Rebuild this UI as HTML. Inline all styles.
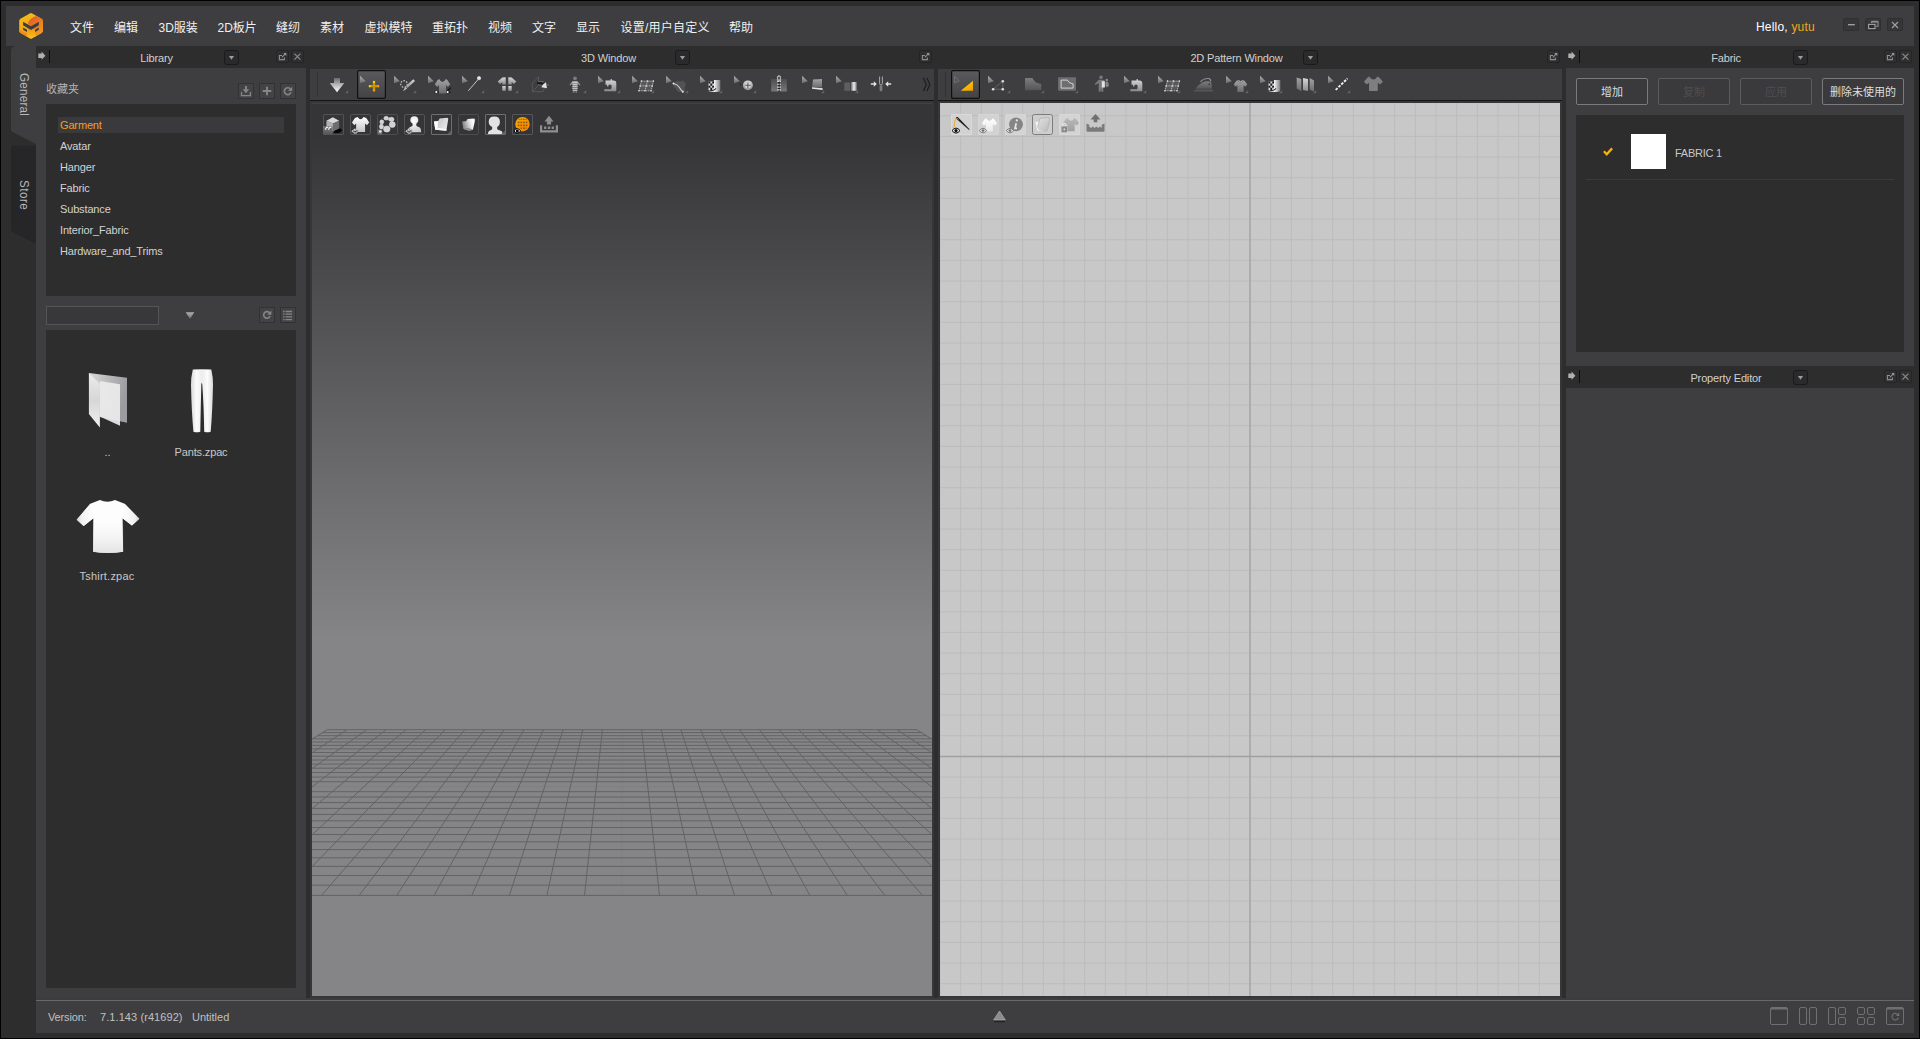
<!DOCTYPE html>
<html lang="zh-CN">
<head>
<meta charset="utf-8">
<title>CLO</title>
<style>
*{box-sizing:border-box;margin:0;padding:0}
html,body{width:1920px;height:1039px;overflow:hidden;background:#000}
body{position:relative;font-family:"Liberation Sans","Noto Sans CJK SC",sans-serif;font-size:11px;color:#c8c8c8;letter-spacing:-0.150px}
.abs{position:absolute}
#frame{left:1px;top:1px;width:1918px;height:1037px;background:#2d2d2d}
#titlebar{left:6px;top:6px;width:1908px;height:40px;background:#3e3e40}
.menu{position:absolute;top:21px;height:14px;line-height:14px;font-size:12px;color:#f0f0f0;white-space:nowrap;letter-spacing:0}
.panel{background:#3e3e40}
.dark{background:#2d2d2d}
.docktitle{position:absolute;height:22px;line-height:22px;text-align:center;color:#d0d0d0;font-size:11px;white-space:nowrap}
.tbtn{position:absolute;width:13px;height:13px;border:1px solid #242426;border-radius:2px;background:#2f2f31}
.dd{position:absolute;width:15px;height:15px;border:1px solid #1a1a1a;border-radius:3px;background:#2a2a2c}
.sbtn{position:absolute;width:16px;height:16px;border:1px solid #323234;background:#434345}
.wbtn{position:absolute;top:18px;width:16px;height:13px;border:1px solid #2f2f31;border-radius:1.500px;background:#363638}
.litem{position:absolute;left:60px;height:16px;line-height:16px;font-size:11px;color:#d2d2d2;white-space:nowrap}
.fbtn{letter-spacing:0;position:absolute;top:78px;height:27px;border:1px solid #7a7a7c;border-radius:2px;background:#3a3a3c;text-align:center;line-height:27px;font-size:11px;color:#dedede;white-space:nowrap}
.fbtn.dis{border-color:#5c5c5e;color:#4e4e50}
.st{position:absolute;top:1010px;font-size:11px;line-height:14px;color:#c0c0c0;white-space:nowrap}
svg{position:absolute;overflow:visible}
</style>
</head>
<body>
<svg width="0" height="0" style="left:0;top:0"><defs>
<linearGradient id="gCur" x1="0" y1="0" x2="0" y2="1"><stop offset="0" stop-color="#b0b0b0"/><stop offset="1" stop-color="#6a6a6a"/></linearGradient>
<linearGradient id="gArr" x1="0" y1="0" x2="0" y2="1"><stop offset="0" stop-color="#6a6a6a"/><stop offset="0.45" stop-color="#b4b4b4"/><stop offset="1" stop-color="#ffffff"/></linearGradient>
<linearGradient id="gSel" x1="0" y1="0" x2="0" y2="1"><stop offset="0" stop-color="#5a5a5c"/><stop offset="1" stop-color="#434345"/></linearGradient>
<linearGradient id="gL" x1="0" y1="0" x2="0" y2="1"><stop offset="0" stop-color="#d8d8d8"/><stop offset="1" stop-color="#8c8c8c"/></linearGradient>
<linearGradient id="gM" x1="0" y1="0" x2="0" y2="1"><stop offset="0" stop-color="#a4a4a4"/><stop offset="1" stop-color="#6a6a6a"/></linearGradient>
<linearGradient id="gD" x1="0" y1="0" x2="0" y2="1"><stop offset="0" stop-color="#7c7c7c"/><stop offset="1" stop-color="#555557"/></linearGradient>
<linearGradient id="gY" x1="0" y1="0" x2="1" y2="1"><stop offset="0" stop-color="#ffe000"/><stop offset="1" stop-color="#f09a00"/></linearGradient>
<linearGradient id="gH" x1="0" y1="0" x2="1" y2="0"><stop offset="0" stop-color="#6a6a6a"/><stop offset="0.5" stop-color="#f0f0f0"/><stop offset="1" stop-color="#7a7a7a"/></linearGradient>
<linearGradient id="gW" x1="0" y1="0" x2="0" y2="1"><stop offset="0" stop-color="#ffffff"/><stop offset="1" stop-color="#c4c4c4"/></linearGradient>
<linearGradient id="gC2" x1="0" y1="0" x2="1" y2="1"><stop offset="0" stop-color="#e2e2e2"/><stop offset="1" stop-color="#bcbcbc"/></linearGradient>
<linearGradient id="gC3" x1="0" y1="0" x2="0" y2="1"><stop offset="0" stop-color="#b8b8b8"/><stop offset="1" stop-color="#a0a0a0"/></linearGradient>
<linearGradient id="gW2" x1="0" y1="0" x2="0" y2="1"><stop offset="0" stop-color="#ffffff"/><stop offset="1" stop-color="#e8e8e8"/></linearGradient>
<linearGradient id="gCl" x1="0" y1="0" x2="1" y2="0.600"><stop offset="0" stop-color="#fafafa"/><stop offset="0.450" stop-color="#cfcfcf"/><stop offset="1" stop-color="#e8e8e8"/></linearGradient>
<linearGradient id="gCd" x1="0" y1="0.300" x2="1" y2="0"><stop offset="0" stop-color="#8a8a8a"/><stop offset="0.550" stop-color="#e8e8e8"/><stop offset="0.800" stop-color="#ffffff"/><stop offset="1" stop-color="#b0b0b0"/></linearGradient>
<linearGradient id="gGl" x1="0" y1="0" x2="1" y2="1"><stop offset="0" stop-color="#f2b000"/><stop offset="1" stop-color="#ff7c00"/></linearGradient>
<radialGradient id="gHd" cx="0.450" cy="0.300" r="0.800"><stop offset="0" stop-color="#ffffff"/><stop offset="1" stop-color="#c6c6c6"/></radialGradient>
<linearGradient id="gDz" x1="0" y1="0" x2="0" y2="1"><stop offset="0" stop-color="#4e4e50"/><stop offset="1" stop-color="#78787a"/></linearGradient>
<radialGradient id="gO" cx="0.4" cy="0.4" r="0.7"><stop offset="0" stop-color="#ffc21a"/><stop offset="1" stop-color="#e07800"/></radialGradient>
</defs></svg>
<div id="frame" class="abs"></div>
<div id="titlebar" class="abs"></div>
<svg style="left:14px;top:8px" width="36" height="36" viewBox="14 8 36 36">
<defs>
<linearGradient id="lgA" x1="0" y1="0" x2="0.300" y2="1"><stop offset="0" stop-color="#f7c016"/><stop offset="1" stop-color="#f09a18"/></linearGradient>
<linearGradient id="lgB" x1="0.200" y1="0" x2="0.800" y2="1"><stop offset="0" stop-color="#df5a2c"/><stop offset="1" stop-color="#f4a018"/></linearGradient>
<linearGradient id="lgC" x1="0" y1="0" x2="0" y2="1"><stop offset="0" stop-color="#ee8a1c"/><stop offset="1" stop-color="#f7c412"/></linearGradient>
</defs>
<path d="M29.800 13.400Q31 12.700 32.200 13.400L41.600 18.800Q42.800 19.500 42.800 20.900V30.800Q42.800 32.200 41.600 32.900L32.200 38.300Q31 39 29.800 38.300L20.400 32.900Q19.200 32.200 19.200 30.800V20.900Q19.200 19.500 20.400 18.800Z" fill="url(#lgA)"/>
<path d="M36.500 15.900L41.600 18.800Q42.800 19.500 42.800 20.900V30.800Q42.800 32.200 41.600 32.900L35 36.700L31 26.200Q27.500 24 28 22.500Q30.500 17.500 36.500 15.900Z" fill="url(#lgB)"/>
<path d="M27.500 30L31 26.200L35 30L36 36.100L32.200 38.300Q31 39 29.800 38.300L26.300 36.300Z" fill="url(#lgC)"/>
<path d="M20 30L27.300 34.200L26.300 36.300L20.400 32.900Q19.500 32.300 19.300 31.300Z" fill="#ee8a1c"/>
<path d="M23.100 21.800L31 26.300L38.800 21.800V25.200L31 30L23.100 25.200Z" fill="#3c3c40"/>
<path d="M23.100 27.400L27 29.650V32.100L23.100 29.800Z" fill="#3c3c40"/>
<path d="M38.800 27.400L35 29.650V32.100L38.800 29.800Z" fill="#3c3c40"/>
</svg>
<div id="menus">
<span class="menu" style="left:70px">文件</span>
<span class="menu" style="left:114px">编辑</span>
<span class="menu" style="left:158.5px">3D服装</span>
<span class="menu" style="left:217.5px">2D板片</span>
<span class="menu" style="left:276px">缝纫</span>
<span class="menu" style="left:320px">素材</span>
<span class="menu" style="left:364.5px">虚拟模特</span>
<span class="menu" style="left:432px">重拓扑</span>
<span class="menu" style="left:488px">视频</span>
<span class="menu" style="left:532px">文字</span>
<span class="menu" style="left:576px">显示</span>
<span class="menu" style="left:620.5px;letter-spacing:0.250px">设置/用户自定义</span>
<span class="menu" style="left:729px">帮助</span>
<span class="menu" style="left:1756px;top:20px;color:#fff;letter-spacing:0.200px">Hello, <span style="color:#f0a81c">yutu</span></span>
</div>
<div class="wbtn" style="left:1843px"></div><div class="wbtn" style="left:1865px"></div><div class="wbtn" style="left:1887px"></div>
<svg style="left:1843px;top:18px" width="62" height="14" viewBox="1843 18 62 14">
<path d="M1848 24.700H1854.800" stroke="#a6a6a6" stroke-width="1.300"/>
<path d="M1871.500 23V21.800H1878V26.300H1876" stroke="#8e8e8e" stroke-width="1.100" fill="none"/><path d="M1871.500 21.600H1878" stroke="#8e8e8e" stroke-width="1.700"/>
<rect x="1868.600" y="24.400" width="6.400" height="4.200" fill="#2a2a2c" stroke="#a2a2a2" stroke-width="1.100"/>
<path d="M1892 22L1898 28M1898 22L1892 28" stroke="#a0a0a0" stroke-width="1.150"/>
</svg>
<div id="sidebar">
<svg style="left:0;top:46px" width="40" height="210" viewBox="0 46 40 210">
<path d="M36 46H16Q11 46 11 51V129.500Q11 131.300 12.600 132.100L36 143.900Z" fill="#3e3e40"/>
<path d="M36 145.800H13.500Q11 145.800 11 148.300V229.500Q11 231.300 12.600 232.100L36 243.900Z" fill="#262628"/>
</svg>
<div class="abs" style="left:12.300px;top:73.300px;width:25px;height:60px;writing-mode:vertical-rl;line-height:25px;font-size:13.500px;letter-spacing:0.300px;color:#b8b8b8;transform:scaleY(0.860);transform-origin:0 0">General</div>
<div class="abs" style="left:12.300px;top:179.800px;width:25px;height:50px;writing-mode:vertical-rl;line-height:25px;font-size:13.500px;letter-spacing:0.600px;color:#b8b8b8;transform:scaleY(0.860);transform-origin:0 0">Store</div>
</div>
<div id="library">
<div class="abs panel" style="left:36px;top:68px;width:270px;height:932px"></div>
<div class="docktitle" style="left:36px;top:47px;width:241px">Library</div>
<svg style="left:38px;top:50px" width="14" height="14" viewBox="0 0 14 14"><path d="M0.300 3.500H3.600V1.600L7.400 5.700L3.600 9.800V7.900H0.300Z" fill="#b0b0b0"/><rect x="11" y="0" width="1" height="13" fill="#0c0c0c"/></svg>
<div class="dd" style="left:224px;top:50px"></div><svg style="left:224px;top:50px" width="15" height="15" viewBox="0 0 15 15"><path d="M4.900 6H10.100L7.500 9.700Z" fill="#9c9c9c"/></svg>
<div class="tbtn" style="left:276px;top:50px"></div><svg style="left:276px;top:50px" width="13" height="13" viewBox="0 0 13 13"><path d="M6 5.500H3.400V9.600H8.400V7.500" stroke="#8e8e8e" stroke-width="1.100" fill="none"/><path d="M5.800 7.400L9.300 3.900" stroke="#8e8e8e" stroke-width="1.100"/><path d="M7.300 3H10.300V6Z" fill="#9a9a9a"/></svg>
<div class="tbtn" style="left:291px;top:50px"></div><svg style="left:291px;top:50px" width="13" height="13" viewBox="0 0 13 13"><path d="M3.400 3.700L9.400 9.700M9.400 3.700L3.400 9.700" stroke="#8c8c8c" stroke-width="1.150"/></svg>
<div class="abs" style="left:46px;top:82px;font-size:11px;line-height:14px;letter-spacing:0;color:#b4b4b4">收藏夹</div>
<div class="sbtn" style="left:238px;top:83px"></div>
<div class="sbtn" style="left:259px;top:83px"></div>
<div class="sbtn" style="left:280px;top:83px"></div>
<svg style="left:238px;top:83px" width="58" height="16" viewBox="0 0 58 16">
<path d="M7 2.900H8.900V6.300H11.200L7.950 10.200L4.700 6.300H7Z" fill="#858587"/><path d="M3.500 9.100V12.700H12.400V9.100" stroke="#858587" stroke-width="1.300" fill="none"/>
<path d="M24.700 8.050H33.300M29 3.800V12.300" stroke="#858587" stroke-width="1.900"/>
<path d="M52.600 6.300A3.400 3.400 0 1 0 53 9.300" stroke="#858587" stroke-width="1.600" fill="none"/><path d="M54.200 3.800V8H50Z" fill="#858587"/>
</svg>
<div class="abs dark" style="left:46px;top:104px;width:250px;height:192px"></div>
<div class="abs" style="left:58px;top:117px;width:226px;height:16px;background:#3a3a3c"></div>
<div class="litem" style="top:117px;color:#f0a01e">Garment</div>
<div class="litem" style="top:138px">Avatar</div>
<div class="litem" style="top:159px">Hanger</div>
<div class="litem" style="top:180px">Fabric</div>
<div class="litem" style="top:201px">Substance</div>
<div class="litem" style="top:222px">Interior_Fabric</div>
<div class="litem" style="top:243px">Hardware_and_Trims</div>
<div class="abs" style="left:46px;top:306px;width:113px;height:19px;border:1px solid #545456;background:#38383a"></div>
<svg style="left:185px;top:312px" width="10" height="8" viewBox="0 0 10 8"><path d="M0.700 0.300H9.300L5 7Z" fill="url(#gCur)"/></svg>
<div class="sbtn" style="left:259px;top:307px"></div>
<div class="sbtn" style="left:280px;top:307px"></div>
<svg style="left:259px;top:307px" width="37" height="16" viewBox="0 0 37 16">
<path d="M10.700 6A3.300 3.300 0 1 0 11.100 9" stroke="#858587" stroke-width="1.600" fill="none"/><path d="M12.400 3.500V7.700H8.200Z" fill="#858587"/>
<path d="M26.500 4.500H33M26.500 7.200H33M26.500 9.900H33M26.500 12.600H33" stroke="#858587" stroke-width="1.300"/><path d="M24 4.500H25.500M24 7.200H25.500M24 9.900H25.500M24 12.600H25.500" stroke="#858587" stroke-width="1.300"/>
</svg>
<div class="abs dark" style="left:46px;top:330px;width:250px;height:658px"></div>
<svg style="left:60px;top:350px" width="200" height="220" viewBox="60 350 200 220">
<defs>
<linearGradient id="fA" x1="0" y1="0" x2="0" y2="1"><stop offset="0" stop-color="#ececec"/><stop offset="0.500" stop-color="#d6d6d6"/><stop offset="1" stop-color="#f0f0f0"/></linearGradient>
<linearGradient id="fB" x1="0" y1="0" x2="1" y2="0.300"><stop offset="0" stop-color="#d8d8d8"/><stop offset="1" stop-color="#9c9ca0"/></linearGradient>
<linearGradient id="pA" x1="0" y1="0" x2="1" y2="0"><stop offset="0" stop-color="#dadada"/><stop offset="0.250" stop-color="#fcfcfc"/><stop offset="0.500" stop-color="#ececec"/><stop offset="0.750" stop-color="#fcfcfc"/><stop offset="1" stop-color="#dadada"/></linearGradient>
<linearGradient id="sA" x1="0" y1="0" x2="1" y2="0"><stop offset="0" stop-color="#e0e0e0"/><stop offset="0.200" stop-color="#fdfdfd"/><stop offset="0.800" stop-color="#fdfdfd"/><stop offset="1" stop-color="#e0e0e0"/></linearGradient>
<linearGradient id="sB" x1="0" y1="0" x2="1" y2="0"><stop offset="0" stop-color="#ffffff"/><stop offset="0.750" stop-color="#f0f0f0"/><stop offset="1" stop-color="#cfcfcf"/></linearGradient>
<linearGradient id="sD" x1="0" y1="0" x2="0" y2="1"><stop offset="0" stop-color="#f4f4f4" stop-opacity="0"/><stop offset="1" stop-color="#d8d8d8" stop-opacity="0.700"/></linearGradient>
<linearGradient id="sC" x1="1" y1="0" x2="0" y2="0"><stop offset="0" stop-color="#ffffff"/><stop offset="0.750" stop-color="#f0f0f0"/><stop offset="1" stop-color="#cfcfcf"/></linearGradient>
</defs>
<path d="M88.900 373.100L127 377.700V422.800L99.800 417Z" fill="url(#fB)"/>
<path d="M99.800 381L120 384.200V425.700L99.800 416.400Z" fill="#ebebeb" opacity="0.920"/>
<path d="M88.900 373.100L99.850 383.500V427.400L88.900 414.100Z" fill="url(#fA)"/>
<path d="M192.800 369.600Q202 368.800 211.300 369.600Q213.200 378 213 385Q212.500 410 210.700 431.800Q207.500 432.800 204.200 431.800Q203.800 405 202.300 384.500L201.800 382.500L201.300 384.500Q200.800 405 200.300 431.800Q197 432.800 193.400 431.800Q191.500 410 191 385Q190.800 378 192.800 369.600Z" fill="url(#pA)"/>
<path d="M90.300 503.700L99.900 500Q107.500 503.400 115 500L124.600 503.700L139.300 518.800L131.900 525.600L122.600 518.300L123.100 551.700Q108 554.200 93.100 551.700L93.300 518.300L83.700 525.900L76.700 519.800Z" fill="url(#sA)"/>
<path d="M93.300 518.300L123.100 518.300L123.100 551.700Q108 554.200 93.100 551.700Z" fill="url(#sD)"/>
<path d="M90.300 503.700L76.700 519.800L83.700 525.900L93.300 518.300L94 508Z" fill="url(#sC)"/>
<path d="M124.600 503.700L139.300 518.800L131.900 525.600L122.600 518.300L122 508Z" fill="url(#sB)"/>
</svg>
<div class="abs" style="left:77px;top:446px;width:61px;text-align:center;font-size:11px;color:#c8c8c8">..</div>
<div class="abs" style="left:161px;top:446px;width:80px;text-align:center;font-size:11px;color:#c8c8c8">Pants.zpac</div>
<div class="abs" style="left:67px;top:570px;width:80px;text-align:center;font-size:11px;letter-spacing:0.220px;color:#c8c8c8">Tshirt.zpac</div>
</div>
<div id="win3d">
<div class="docktitle" style="left:310px;top:47px;width:597px;height:23px;line-height:23px">3D Window</div>
<div class="dd" style="left:675px;top:50px"></div><svg style="left:675px;top:50px" width="15" height="15" viewBox="0 0 15 15"><path d="M4.900 6H10.100L7.500 9.700Z" fill="#9c9c9c"/></svg>
<div class="tbtn" style="left:919px;top:50px"></div><svg style="left:919px;top:50px" width="13" height="13" viewBox="0 0 13 13"><path d="M6 5.500H3.400V9.600H8.400V7.500" stroke="#8e8e8e" stroke-width="1.100" fill="none"/><path d="M5.800 7.400L9.300 3.900" stroke="#8e8e8e" stroke-width="1.100"/><path d="M7.300 3H10.300V6Z" fill="#9a9a9a"/></svg>
<div class="abs panel" style="left:310px;top:69px;width:624px;height:31px"></div>
<div class="abs" style="left:310px;top:100px;width:624px;height:898px;background:#363638"></div>
<div class="abs" style="left:310px;top:100px;width:624px;height:1.200px;background:#141414"></div>
<div class="abs" style="left:312px;top:103px;width:620px;height:893px;background:linear-gradient(to bottom,#353537 0,#353537 34px,#858587 537px,#858587 100%);overflow:hidden;box-shadow:inset 0 1px 0 #414143">
<svg style="left:-312px;top:-103px" width="1920" height="1039" viewBox="0 0 1920 1039"><path d="M235.0 786.6H1009.0M622.0 895.4L622.0 729.7" fill="none" stroke="#808082" stroke-width="1"/><path d="M58.8 895.4H1185.2M75.4 885.2H1168.6M91.0 875.5H1153.0M105.8 866.4H1138.2M119.8 857.8H1124.2M133.0 849.6H1111.0M145.6 841.8H1098.4M157.5 834.5H1086.5M168.8 827.5H1075.2M179.6 820.8H1064.4M190.0 814.4H1054.0M199.8 808.4H1044.2M209.2 802.6H1034.8M218.2 797.0H1025.8M226.8 791.7H1017.2M242.9 781.7H1001.1M250.5 777.1H993.5M257.8 772.5H986.2M264.8 768.2H979.2M271.6 764.1H972.4M278.1 760.0H965.9M284.3 756.2H959.7M290.4 752.5H953.6M296.2 748.9H947.8M301.8 745.4H942.2M307.3 742.0H936.7M312.5 738.8H931.5M317.6 735.7H926.4M322.5 732.6H921.5M327.3 729.7H916.7M58.8 895.4L327.3 729.7M96.3 895.4L346.9 729.7M133.9 895.4L366.6 729.7M171.4 895.4L386.2 729.7M209.0 895.4L405.9 729.7M246.5 895.4L425.5 729.7M284.1 895.4L445.2 729.7M321.6 895.4L464.8 729.7M359.2 895.4L484.5 729.7M396.7 895.4L504.1 729.7M434.2 895.4L523.8 729.7M471.8 895.4L543.4 729.7M509.4 895.4L563.1 729.7M546.9 895.4L582.7 729.7M584.5 895.4L602.4 729.7M659.5 895.4L641.6 729.7M697.1 895.4L661.3 729.7M734.6 895.4L680.9 729.7M772.2 895.4L700.6 729.7M809.8 895.4L720.2 729.7M847.3 895.4L739.9 729.7M884.8 895.4L759.5 729.7M922.4 895.4L779.2 729.7M960.0 895.4L798.8 729.7M997.5 895.4L818.5 729.7M1035.0 895.4L838.1 729.7M1072.6 895.4L857.8 729.7M1110.2 895.4L877.4 729.7M1147.7 895.4L897.1 729.7M1185.2 895.4L916.7 729.7" fill="none" stroke="#636365" stroke-width="1"/></svg>
</div>
<div class="abs" style="left:317px;top:72px;width:1px;height:25px;background:#323234"></div>
<svg style="left:320px;top:69px" width="34" height="31" viewBox="0 0 34 31"><path d="M14 9H20V14H24.300L17 23.200L9.700 14H14Z" fill="url(#gArr)"/><path d="M28.200 21V24.200H25Z" fill="#626264"/></svg>
<svg style="left:354px;top:69px" width="34" height="31" viewBox="0 0 34 31"><rect x="3.600" y="1.600" width="27.800" height="27.800" rx="1.300" fill="url(#gSel)" stroke="#101010" stroke-width="1.200"/><path d="M6 6.800V14.200L11.800 12.200Z" fill="url(#gCur)"/><path d="M20 12.200V22.200M15 17.200H25" stroke="#c89400" stroke-width="2.300" fill="none"/><circle cx="20" cy="13" r="1.150" fill="#ffd400"/><circle cx="20" cy="21.400" r="1.150" fill="#ff9a00"/><circle cx="15.800" cy="17.200" r="1.150" fill="#ffd400"/><circle cx="24.200" cy="17.200" r="1.150" fill="#ff9a00"/></svg>
<svg style="left:388px;top:69px" width="34" height="31" viewBox="0 0 34 31"><path d="M6 6.800V14.200L11.800 12.200Z" fill="url(#gCur)"/><circle cx="16" cy="15" r="3.300" fill="none" stroke="#c8c8c8" stroke-width="1.200" stroke-dasharray="1.600 1.300"/><path d="M25.300 10.300L27 12L19.500 19L17.500 17.200Z" fill="url(#gL)"/><path d="M17.300 17.700L19.200 19.500L15 22.300Z" fill="#bdbdbd"/><path d="M28.200 21V24.200H25Z" fill="#626264"/></svg>
<svg style="left:422px;top:69px" width="34" height="31" viewBox="0 0 34 31"><path d="M6 6.800V14.200L11.800 12.200Z" fill="url(#gCur)"/><path d="M17.09 10.00Q20.50 16.09 23.91 10.00L25.32 11.02L28.25 15.37L25.95 18.12L24.06 16.23V24.50H16.94V16.23L15.05 18.12L12.75 15.37L15.68 11.02Z" fill="url(#gM)" /><path d="M12.500 23.300H17M24 23.300H28.500M28.600 18.500L25 23" stroke="#1a1a1a" stroke-width="1.600" fill="none"/><circle cx="14.300" cy="23" r="1.100" fill="#fff"/><circle cx="25.600" cy="23" r="1.100" fill="#fff"/></svg>
<svg style="left:456px;top:69px" width="34" height="31" viewBox="0 0 34 31"><path d="M6 6.800V14.200L11.800 12.200Z" fill="url(#gCur)"/><path d="M12.300 21.800L22 10.600" stroke="#c4c4c4" stroke-width="1"/><circle cx="23" cy="9.300" r="1.950" fill="url(#gW)"/><path d="M28.200 21V24.200H25Z" fill="#626264"/></svg>
<svg style="left:490px;top:69px" width="34" height="31" viewBox="0 0 34 31"><path d="M15.700 8.200V15.500H12.300V13.300L10 15L7.700 12.400L12.300 8.500Z" fill="url(#gL)"/><path d="M18.300 8.200V15.500H21.700V13.300L24 15L26.300 12.400L21.700 8.500Z" fill="url(#gL)"/><rect x="12.300" y="17" width="3.400" height="4.800" fill="url(#gL)"/><rect x="18.300" y="17" width="3.400" height="4.800" fill="url(#gL)"/><path d="M28.200 21V24.200H25Z" fill="#626264"/></svg>
<svg style="left:524px;top:69px" width="34" height="31" viewBox="0 0 34 31"><path d="M8.300 14.200L14.500 8V16.500L8.300 22.700ZM14.500 16.500H21.500L19 22.700H8.300" fill="none" stroke="#58585a" stroke-width="1"/><path d="M14.500 12.600H19.500" stroke="#6a6a6c" stroke-width="1"/><path d="M13 14H17.200L21.300 17.200" stroke="#1c1c1c" stroke-width="2.200" fill="none"/><path d="M19 15.600L22 13.200L23 19.200L17.300 18.300Z" fill="#e0e0e0"/><path d="M22.500 16.800L25 15.600" stroke="#6a6a6c" stroke-width="1"/></svg>
<svg style="left:558px;top:69px" width="34" height="31" viewBox="0 0 34 31"><circle cx="17" cy="9.300" r="1.900" fill="#7c7c7c"/><path d="M14.700 12H19.300L22.500 15.800L21.700 16.600L19.600 14.600V20L19 24H17.600L17 20.500L16.400 24H15L14.400 20V14.600L12.300 16.600L11.500 15.800Z" fill="url(#gM)"/><path d="M14.400 13.500H19.600M14.400 15.500H19.600M14.400 17.500H19.600M14.400 19.500H19.600M14.800 21.500H19.200" stroke="#d8d8d8" stroke-width="0.700" fill="none"/><path d="M28.200 21V24.200H25Z" fill="#626264"/></svg>
<svg style="left:592px;top:69px" width="34" height="31" viewBox="0 0 34 31"><path d="M6 6.800V14.200L11.800 12.200Z" fill="url(#gCur)"/><path d="M13.500 11.500H18.500V10.200H20V11.500H22Q24.300 11.500 24.300 14V22.300H12.300V20.300H19.300V15.800H16.500V17.500H15V15.800H13.500Z" fill="url(#gL)"/><path d="M17 19L19.300 16.500V19Z" fill="#3e3e40"/><path d="M28.200 21V24.200H25Z" fill="#626264"/></svg>
<svg style="left:626px;top:69px" width="34" height="31" viewBox="0 0 34 31"><path d="M6 6.800V14.200L11.800 12.200Z" fill="url(#gCur)"/><path d="M15.400 12.100H27.400L25.100 21.800H12.900Z" fill="#58585a"/><path d="M15.400 12.100H27.400M14.100 16.900H26.300M12.900 21.800H25.100M15.400 12.100L12.900 21.800M21.500 12.100L19 21.800M27.400 12.100L25.100 21.800" stroke="#c2c2c2" stroke-width="0.800" stroke-dasharray="1.500 0.700" fill="none"/><path d="M15.400 12.100h0.010M21.500 12.100h0.010M27.400 12.100h0.010M14.100 16.900h0.010M20.200 16.900h0.010M26.300 16.900h0.010M12.900 21.800h0.010M19 21.800h0.010M25.100 21.800h0.010" stroke="#e8e8e8" stroke-width="1.500" stroke-linecap="round"/><path d="M28.200 21V24.200H25Z" fill="#626264"/></svg>
<svg style="left:660px;top:69px" width="34" height="31" viewBox="0 0 34 31"><path d="M6 6.800V14.200L11.800 12.200Z" fill="url(#gCur)"/><path d="M14.500 13.500L17.500 11.500L20.500 12.700L23 11.300L26.200 15.500L24.500 19L25.500 22.500L18 23L15.500 19.500L13 17Z" fill="#525254"/><path d="M13.400 14.500Q17.500 15.500 19.200 18.200T22.800 22.800" stroke="#d0d0d0" stroke-width="1.100" fill="none"/><circle cx="13.500" cy="14.500" r="1" fill="#e8e8e8"/><circle cx="22.800" cy="22.800" r="1" fill="#e8e8e8"/><path d="M28.200 21V24.200H25Z" fill="#626264"/></svg>
<svg style="left:694px;top:69px" width="34" height="31" viewBox="0 0 34 31"><path d="M6 6.800V14.200L11.800 12.200Z" fill="url(#gCur)"/><path d="M14.500 12.500H20V21H14.500Z" fill="#d8d8d8"/><path d="M14.500 12.500h1.850v2.100h-1.850zM18.200 12.500h1.850v2.100h-1.850zM16.350 14.600h1.850v2.100h-1.850zM14.500 16.700h1.850v2.100h-1.850zM18.200 16.700h1.850v2.100h-1.850zM16.350 18.800h1.850v2.200h-1.850z" fill="#1a1a1a"/><path d="M20 11H26.300V20.500Q26.300 23 23 23H15.500Q14.500 23 14.500 21.500Q19.500 21.500 20 18Z" fill="url(#gH)"/><path d="M16.500 21.700Q20.500 21.500 22 19.500" stroke="#1a1a1a" stroke-width="1.100" fill="none"/><path d="M28.200 21V24.200H25Z" fill="#626264"/></svg>
<svg style="left:728px;top:69px" width="34" height="31" viewBox="0 0 34 31"><path d="M6 6.800V14.200L11.800 12.200Z" fill="url(#gCur)"/><path d="M11.800 14.600L13.200 16" stroke="#2a2a2a" stroke-width="1.200"/><circle cx="19.900" cy="16.300" r="4.900" fill="url(#gL)"/><circle cx="19.900" cy="16.300" r="3" fill="#d6d6d6"/><path d="M17.200 16.300H22.600M19.900 13.600V19" stroke="#4a4a4a" stroke-width="0.900"/><path d="M28.200 21V24.200H25Z" fill="#626264"/></svg>
<svg style="left:762px;top:69px" width="34" height="31" viewBox="0 0 34 31"><path d="M9.200 10H24.800V22.500H9.200Z" fill="url(#gDz)"/><path d="M16 10H18V22.500H16Z" fill="#222"/><path d="M15.200 12.500H18.800M15.200 15.300H18.800M15.200 18.100H18.800M15.200 20.900H18.800" stroke="#e8e8e8" stroke-width="1.100" stroke-dasharray="1.700 0.500"/><path d="M15.400 7.500Q17 5.500 18.600 7.500V11.500H15.400Z" fill="#9a9a9a" stroke="#d8d8d8" stroke-width="0.600"/><rect x="16.300" y="8" width="1.400" height="2.300" fill="#3a3a3a"/></svg>
<svg style="left:796px;top:69px" width="34" height="31" viewBox="0 0 34 31"><path d="M6 6.800V14.200L11.800 12.200Z" fill="url(#gCur)"/><path d="M17 10.500L26 10V18.500L16.200 18Z" fill="url(#gM)"/><path d="M16 18.300L26.600 19.300V21L16 19.800Z" fill="#e6e6e6"/><path d="M28.200 21V24.200H25Z" fill="#626264"/></svg>
<svg style="left:830px;top:69px" width="34" height="31" viewBox="0 0 34 31"><path d="M6 6.800V14.200L11.800 12.200Z" fill="url(#gCur)"/><path d="M14.300 13.500H20.300V21.800H14.300Z" fill="#5e5e60"/><path d="M21 13H26.800V21.800H21Z" fill="url(#gH)"/><path d="M28.200 21V24.200H25Z" fill="#626264"/></svg>
<svg style="left:864px;top:69px" width="34" height="31" viewBox="0 0 34 31"><path d="M15.600 7.500V14.500Q15.600 16 17 16T18.400 14.500V7.500" stroke="#a8a8a8" stroke-width="1" fill="none"/><path d="M15.600 16.500H18.400V20.800Q18.400 22.300 17 22.300T15.600 20.800Z" fill="#7c7c7c"/><path d="M6.800 15H10.500M23.500 15H27.200" stroke="#dcdcdc" stroke-width="1.300"/><path d="M9.800 12.300L12.800 15L9.800 17.700ZM24.200 12.300L21.200 15L24.200 17.700Z" fill="#e6e6e6"/></svg>
<svg style="left:922px;top:77px" width="10" height="15" viewBox="0 0 10 15"><path d="M1.500 1L4.300 7.500L1.500 14M5 1L7.800 7.500L5 14" stroke="#1c1c1e" stroke-width="1.100" fill="none"/></svg>
<svg style="left:322.7px;top:113.800px" width="21" height="21" viewBox="0 0 21 21"><rect x="0.500" y="0.500" width="20" height="20" rx="0.5" fill="none" stroke="#525254" stroke-width="1"/><path d="M11.500 15.200L17 14.200L19.400 16.200L16 18.900H11Z" fill="#050505"/><path d="M9.800 3.300L16.200 6.700L10 9.500L3.400 6.700Z" fill="#d8d8d8"/><path d="M3.400 6.700L10 9.500V17.500L3.400 14.500Z" fill="#b2b2b2"/><path d="M10 9.500L16.200 6.700V14.500L10 17.500Z" fill="#6c6c6c"/><path d="M0.300 12.200H9.700V20.800H0.300Z" fill="url(#gD)"/><path d="M2.200 15.700L3.700 13.300H5.200M5.300 15.700L6.800 13.300H8.300" stroke="#f0f0f0" stroke-width="1.200" fill="none"/></svg>
<svg style="left:349.7px;top:113.800px" width="21" height="21" viewBox="0 0 21 21"><rect x="0.500" y="0.500" width="20" height="20" rx="1.5" fill="none" stroke="#545456" stroke-width="1"/><path d="M7.68 2.95Q10.60 7.45 13.52 2.95L16.31 4.00L19.20 8.50L16.93 11.35L15.07 9.40V17.95H6.13V9.40L4.27 11.35L2.00 8.50L4.89 4.00Z" fill="url(#gW)" /><path d="M1.55 17.20Q5.25 11.60 8.95 17.20Q5.25 22.80 1.55 17.20Z" fill="#7c7c7c"/><path d="M2.05 17.20Q5.25 13.20 8.45 17.20Q5.25 21.20 2.05 17.20Z" fill="none" stroke="#f4f4f4" stroke-width="1" stroke-dasharray="1.300 1.100"/><circle cx="5.25" cy="17.20" r="1" fill="#4a4a4a"/><circle cx="5.05" cy="16.20" r="0.700" fill="#fff"/></svg>
<svg style="left:376.7px;top:113.800px" width="21" height="21" viewBox="0 0 21 21"><rect x="0.500" y="0.500" width="20" height="20" rx="1.5" fill="none" stroke="#4e4e50" stroke-width="1"/><ellipse cx="15.3" cy="10.6" rx="3" ry="3" fill="#d2d2d2" stroke="#e6e6e6" stroke-width="0.500"/><ellipse cx="9.8" cy="15" rx="3.3" ry="3.1" fill="#d2d2d2" stroke="#e6e6e6" stroke-width="0.500"/><ellipse cx="4.4" cy="12.6" rx="2" ry="2.5" fill="#d2d2d2" stroke="#e6e6e6" stroke-width="0.500"/><ellipse cx="4.8" cy="7.95" rx="2" ry="2.1" fill="#d2d2d2" stroke="#e6e6e6" stroke-width="0.500"/><ellipse cx="9.2" cy="4.2" rx="2.3" ry="1.9" fill="#d2d2d2" stroke="#e6e6e6" stroke-width="0.500"/><ellipse cx="14.3" cy="5.3" rx="2.7" ry="2.1" fill="#d2d2d2" stroke="#e6e6e6" stroke-width="0.500"/><rect x="0.500" y="15.500" width="4.800" height="5" fill="#6c6c6c"/><circle cx="3.300" cy="17.500" r="1.300" fill="#ececec"/></svg>
<svg style="left:403.7px;top:113.800px" width="21" height="21" viewBox="0 0 21 21"><rect x="0.500" y="0.500" width="20" height="20" rx="1.5" fill="none" stroke="#545456" stroke-width="1"/><path d="M10.300 2.300Q14.300 2.300 14.300 6.200Q14.300 8.800 12.300 9.800V11.300Q12.300 12.200 13.500 12.500Q16.400 13.200 16.800 15L17.200 18.200H3.800L4.300 15Q4.800 13.200 7.300 12.500Q8.600 12.200 8.600 11.300V9.800Q6.300 8.800 6.300 6.200Q6.300 2.300 10.300 2.300Z" fill="url(#gHd)"/><path d="M1.55 17.20Q5.25 11.60 8.95 17.20Q5.25 22.80 1.55 17.20Z" fill="#7c7c7c"/><path d="M2.05 17.20Q5.25 13.20 8.45 17.20Q5.25 21.20 2.05 17.20Z" fill="none" stroke="#f4f4f4" stroke-width="1" stroke-dasharray="1.300 1.100"/><circle cx="5.25" cy="17.20" r="1" fill="#4a4a4a"/><circle cx="5.05" cy="16.20" r="0.700" fill="#fff"/></svg>
<svg style="left:430.7px;top:113.800px" width="21" height="21" viewBox="0 0 21 21"><rect x="0.500" y="0.500" width="20" height="20" rx="0.5" fill="none" stroke="#6e6e70" stroke-width="1"/><path d="M3 7.500L7.200 7L8.700 4.500L16 3.800Q17.600 3.800 17.200 5.500L15.300 16.700L4.300 15.800Z" fill="url(#gCl)"/><path d="M3 7.500L7.200 7.300L6.300 15.900L4.300 15.800Z" fill="#ffffff"/><path d="M4.300 15.800L6.500 13.800L15.600 15L15.300 16.700Z" fill="#f6f6f6"/><path d="M20 16.500V20H16.500Z" fill="#5e5e60"/></svg>
<svg style="left:457.7px;top:113.800px" width="21" height="21" viewBox="0 0 21 21"><rect x="0.500" y="0.500" width="20" height="20" rx="1.5" fill="none" stroke="#4c4c4e" stroke-width="1"/><path d="M4.200 7.600L8 7.300L9.500 5L16 4.500Q17.600 4.500 17.200 6L14.900 15.800Q10 17.800 5.300 14.800Z" fill="url(#gCd)"/><path d="M5.300 14.800Q10 12.600 14.900 15.800Q10 17.800 5.300 14.800Z" fill="#8c8c8c"/></svg>
<svg style="left:484.7px;top:113.800px" width="21" height="21" viewBox="0 0 21 21"><rect x="0.500" y="0.500" width="20" height="20" rx="0.5" fill="none" stroke="#6e6e70" stroke-width="1"/><path d="M9.300 2.400Q14.900 2.400 14.900 7.800Q14.900 11.500 12.200 13V14.800Q12.200 15.800 13.500 16.100Q17 16.700 17.500 18.800V19.900H3V18.800Q3.500 16.700 6 16.100Q7.200 15.800 7.200 14.800V13Q3.700 11.500 3.700 7.800Q3.700 2.400 9.300 2.400Z" fill="#e2e2e2"/><path d="M20 16.500V20H16.500Z" fill="#5e5e60"/></svg>
<svg style="left:511.7px;top:113.800px" width="21" height="21" viewBox="0 0 21 21"><rect x="0.500" y="0.500" width="20" height="20" rx="0.5" fill="none" stroke="#565658" stroke-width="1"/><circle cx="10.500" cy="10.200" r="7.200" fill="url(#gGl)"/><rect x="5.8" y="7.6" width="1.6" height="1.6" fill="#6e4a10" opacity="0.800"/><rect x="8.4" y="7.6" width="1.7" height="1.6" fill="#6e4a10" opacity="0.800"/><rect x="11.1" y="7.6" width="1.7" height="1.6" fill="#6e4a10" opacity="0.800"/><rect x="13.8" y="7.6" width="1.5" height="1.6" fill="#6e4a10" opacity="0.800"/><rect x="5.8" y="10.6" width="1.6" height="1.6" fill="#6e4a10" opacity="0.800"/><rect x="8.4" y="10.6" width="1.7" height="1.6" fill="#6e4a10" opacity="0.800"/><rect x="11.1" y="10.6" width="1.7" height="1.6" fill="#6e4a10" opacity="0.800"/><rect x="13.8" y="10.6" width="1.5" height="1.6" fill="#6e4a10" opacity="0.800"/><rect x="8.5" y="13.5" width="1.5" height="1.4" fill="#6e4a10" opacity="0.800"/><rect x="11.1" y="13.5" width="1.7" height="1.5" fill="#6e4a10" opacity="0.800"/><rect x="13.6" y="13.5" width="1" height="1.2" fill="#6e4a10" opacity="0.800"/><rect x="6.5" y="5" width="1.1" height="0.9" fill="#6e4a10" opacity="0.800"/><rect x="8.6" y="4.8" width="1.5" height="1.1" fill="#6e4a10" opacity="0.800"/><rect x="11.1" y="4.8" width="1.6" height="1.1" fill="#6e4a10" opacity="0.800"/><rect x="13.5" y="5" width="1.1" height="0.9" fill="#6e4a10" opacity="0.800"/><path d="M1.90 16.90Q5.30 12.50 8.70 16.90Q5.30 21.30 1.90 16.90Z" fill="#f4f4f4" stroke="#000" stroke-width="1.00"/><circle cx="5.30" cy="16.90" r="1.50" fill="#000"/></svg>
<svg style="left:540.400px;top:114.500px" width="18" height="18" viewBox="0 0 18 18"><path d="M9 0.700L13.500 6.600H11.100V9.500H6.900V6.600H4.500Z" fill="#8e8e90"/><path d="M0 10.300H2.200V15.300H15.800V10.300H18V17.500H0Z" fill="#8e8e90"/><rect x="4.100" y="11.500" width="2.300" height="2.500" fill="#8e8e90"/><rect x="7.900" y="11.500" width="2.300" height="2.500" fill="#8e8e90"/><rect x="11.600" y="11.500" width="2.300" height="2.500" fill="#8e8e90"/></svg>
</div>
<div id="win2d">
<div class="docktitle" style="left:938px;top:47px;width:597px;height:23px;line-height:23px">2D Pattern Window</div>
<div class="dd" style="left:1303px;top:50px"></div><svg style="left:1303px;top:50px" width="15" height="15" viewBox="0 0 15 15"><path d="M4.900 6H10.100L7.500 9.700Z" fill="#9c9c9c"/></svg>
<div class="tbtn" style="left:1547px;top:50px"></div><svg style="left:1547px;top:50px" width="13" height="13" viewBox="0 0 13 13"><path d="M6 5.500H3.400V9.600H8.400V7.500" stroke="#8e8e8e" stroke-width="1.100" fill="none"/><path d="M5.800 7.400L9.300 3.900" stroke="#8e8e8e" stroke-width="1.100"/><path d="M7.300 3H10.300V6Z" fill="#9a9a9a"/></svg>
<div class="abs panel" style="left:938px;top:69px;width:624px;height:31px"></div>
<div class="abs" style="left:938px;top:100px;width:624px;height:898px;background:#363638"></div>
<div class="abs" style="left:938px;top:100px;width:624px;height:1.200px;background:#141414"></div>
<div class="abs" style="left:940px;top:103px;width:620px;height:893px;background:#c8c8c8;overflow:hidden">
<svg style="left:-940px;top:-103px" width="1920" height="1039" viewBox="0 0 1920 1039"><path d="M940.0 103V996M960.67 103V996M981.33 103V996M1002.0 103V996M1022.67 103V996M1043.33 103V996M1064.0 103V996M1084.67 103V996M1105.33 103V996M1126.0 103V996M1146.67 103V996M1167.33 103V996M1188.0 103V996M1208.67 103V996M1229.33 103V996M1270.67 103V996M1291.33 103V996M1312.0 103V996M1332.67 103V996M1353.33 103V996M1374.0 103V996M1394.67 103V996M1415.33 103V996M1436.0 103V996M1456.67 103V996M1477.33 103V996M1498.0 103V996M1518.67 103V996M1539.33 103V996M940 115.73H1560M940 136.4H1560M940 157.07H1560M940 177.73H1560M940 198.4H1560M940 219.07H1560M940 239.73H1560M940 260.4H1560M940 281.07H1560M940 301.73H1560M940 322.4H1560M940 343.07H1560M940 363.73H1560M940 384.4H1560M940 405.07H1560M940 425.73H1560M940 446.4H1560M940 467.07H1560M940 487.73H1560M940 508.4H1560M940 529.07H1560M940 549.73H1560M940 570.4H1560M940 591.07H1560M940 611.73H1560M940 632.4H1560M940 653.07H1560M940 673.73H1560M940 694.4H1560M940 715.07H1560M940 735.73H1560M940 777.07H1560M940 797.73H1560M940 818.4H1560M940 839.07H1560M940 859.73H1560M940 880.4H1560M940 901.07H1560M940 921.73H1560M940 942.4H1560M940 963.07H1560M940 983.73H1560" fill="none" stroke="#bcbcbc" stroke-width="1"/><path d="M1250 103V996" fill="none" stroke="#adadad" stroke-width="2"/><path d="M940 756.400H1560" fill="none" stroke="#a0a0a0" stroke-width="1.500"/></svg>
</div>
<div class="abs" style="left:945px;top:72px;width:1px;height:25px;background:#323234"></div>
<svg style="left:948px;top:69px" width="34" height="31" viewBox="0 0 34 31"><rect x="3.600" y="1.600" width="27.800" height="27.800" rx="1.300" fill="url(#gSel)" stroke="#101010" stroke-width="1.200"/><path d="M6.600 7.400V13.800L11.200 11.600Z" fill="none" stroke="#77777a" stroke-width="0.900"/><path d="M25 11.800V21.800H12.800Z" fill="url(#gY)"/></svg>
<svg style="left:982px;top:69px" width="34" height="31" viewBox="0 0 34 31"><path d="M6 6.800V14.200L11.800 12.200Z" fill="url(#gCur)"/><path d="M20.800 12.200V20.200H11.100Z" fill="none" stroke="#6a6a6c" stroke-width="0.900"/><circle cx="20.800" cy="12.200" r="1.300" fill="#e0e0e0"/><circle cx="20.800" cy="20.200" r="1.300" fill="#e0e0e0"/><circle cx="11.100" cy="20.200" r="1.300" fill="#e0e0e0"/><path d="M28.200 21V24.200H25Z" fill="#626264"/></svg>
<svg style="left:1016px;top:69px" width="34" height="31" viewBox="0 0 34 31"><path d="M9 9.100H16.500Q18.500 14.400 25.300 15V21.200H9Z" fill="url(#gD)"/><path d="M28.200 21V24.200H25Z" fill="#626264"/></svg>
<svg style="left:1050px;top:69px" width="34" height="31" viewBox="0 0 34 31"><rect x="8.100" y="8.200" width="17.900" height="13.600" rx="0.800" fill="#6e6e70"/><path d="M11.100 11.100H17.300Q18.300 14.200 23.100 14.900V19.100H11.100Z" fill="none" stroke="#d4d4d4" stroke-width="1"/><path d="M28.200 21V24.200H25Z" fill="#626264"/></svg>
<svg style="left:1084px;top:69px" width="34" height="31" viewBox="0 0 34 31"><g transform="translate(0 -1)"><circle cx="17" cy="9.300" r="1.700" fill="#7c7c7c"/><path d="M14.800 11.700H19.200L21 13V19L19.300 19.500V23.800H17.500L17 20L16.500 23.800H14.700V15L11.500 17L10.700 16.200Z" fill="#7a7a7c"/><path d="M17.800 13.200H20.800V19.500H17.800Z" fill="#e2e2e2"/><circle cx="22.800" cy="12" r="1.300" fill="#8a8a8a"/><path d="M21.500 13.800H24L25 17.500L23 19.500L21.500 18Z" fill="#868686"/></g></svg>
<svg style="left:1118px;top:69px" width="34" height="31" viewBox="0 0 34 31"><path d="M6 6.800V14.200L11.800 12.200Z" fill="url(#gCur)"/><path d="M13.500 11.500H18.500V10.200H20V11.500H22Q24.300 11.500 24.300 14V22.300H12.300V20.300H19.300V15.800H16.500V17.500H15V15.800H13.500Z" fill="url(#gL)"/><path d="M17 19L19.300 16.500V19Z" fill="#3e3e40"/><path d="M28.200 21V24.200H25Z" fill="#626264"/></svg>
<svg style="left:1152px;top:69px" width="34" height="31" viewBox="0 0 34 31"><path d="M6 6.800V14.200L11.800 12.200Z" fill="url(#gCur)"/><path d="M15.400 12.100H27.400L25.100 21.800H12.900Z" fill="#58585a"/><path d="M15.400 12.100H27.400M14.100 16.900H26.300M12.900 21.800H25.100M15.400 12.100L12.900 21.800M21.500 12.100L19 21.800M27.400 12.100L25.100 21.800" stroke="#c2c2c2" stroke-width="0.800" stroke-dasharray="1.500 0.700" fill="none"/><path d="M15.400 12.100h0.010M21.500 12.100h0.010M27.400 12.100h0.010M14.100 16.900h0.010M20.200 16.900h0.010M26.300 16.900h0.010M12.900 21.800h0.010M19 21.800h0.010M25.100 21.800h0.010" stroke="#e8e8e8" stroke-width="1.500" stroke-linecap="round"/><path d="M28.200 21V24.200H25Z" fill="#626264"/></svg>
<svg style="left:1186px;top:69px" width="34" height="31" viewBox="0 0 34 31"><path d="M9.500 19.800Q13.500 13.800 19.500 12.300H23Q25.300 12.300 25.500 14.500L26 19.800Z" fill="url(#gD)"/><path d="M14.500 12.800Q17.500 9.300 22.500 9.500Q24.800 9.800 24.800 12.300" stroke="#8e8e8e" stroke-width="1.200" fill="none"/><path d="M7.500 22.600L9.500 20.500H26L27.800 22.600Z" fill="#565658"/><circle cx="23.300" cy="15.300" r="0.800" fill="#2a2a2a"/></svg>
<svg style="left:1220px;top:69px" width="34" height="31" viewBox="0 0 34 31"><path d="M6 6.800V14.200L11.800 12.200Z" fill="url(#gCur)"/><path d="M17.51 11.20Q20.50 16.16 23.49 11.20L24.73 12.03L27.30 15.57L25.28 17.81L23.63 16.27V23.00H17.37V16.27L15.72 17.81L13.70 15.57L16.27 12.03Z" fill="url(#gM)" /><path d="M18.500 11.500Q20.500 14.200 22.500 11.500" stroke="#e0e0e0" stroke-width="1" fill="none"/><path d="M28.200 21V24.200H25Z" fill="#626264"/></svg>
<svg style="left:1254px;top:69px" width="34" height="31" viewBox="0 0 34 31"><path d="M6 6.800V14.200L11.800 12.200Z" fill="url(#gCur)"/><path d="M14.500 12.500H20V21H14.500Z" fill="#d8d8d8"/><path d="M14.500 12.500h1.850v2.100h-1.850zM18.200 12.500h1.850v2.100h-1.850zM16.350 14.600h1.850v2.100h-1.850zM14.500 16.700h1.850v2.100h-1.850zM18.200 16.700h1.850v2.100h-1.850zM16.350 18.800h1.850v2.200h-1.850z" fill="#1a1a1a"/><path d="M20 11H26.300V20.500Q26.300 23 23 23H15.500Q14.500 23 14.500 21.500Q19.500 21.500 20 18Z" fill="url(#gH)"/><path d="M16.500 21.700Q20.500 21.500 22 19.500" stroke="#1a1a1a" stroke-width="1.100" fill="none"/><path d="M28.200 21V24.200H25Z" fill="#626264"/></svg>
<svg style="left:1288px;top:69px" width="34" height="31" viewBox="0 0 34 31"><path d="M8.700 8.500L13.300 10V22.300L8.700 19.500Z" fill="url(#gM)"/><path d="M15 9L20 10V22L15 21Z" fill="url(#gL)"/><path d="M21.700 9L26 11.500V22.800L21.700 20.500Z" fill="url(#gM)"/><path d="M28.200 21V24.200H25Z" fill="#626264"/></svg>
<svg style="left:1322px;top:69px" width="34" height="31" viewBox="0 0 34 31"><path d="M6 6.800V14.200L11.800 12.200Z" fill="url(#gCur)"/><path d="M13.700 20.900L25.500 9.500" stroke="#f0f0f0" stroke-width="1.900" stroke-dasharray="2.600 1.300"/><path d="M28.200 21V24.200H25Z" fill="#626264"/></svg>
<svg style="left:1356px;top:69px" width="34" height="31" viewBox="0 0 34 31"><path d="M13.22 7.50Q17.40 13.59 21.58 7.50L23.31 8.52L26.90 12.87L24.08 15.62L21.77 13.73V22.00H13.03V13.73L10.72 15.62L7.90 12.87L11.49 8.52Z" fill="#7e7e80" /></svg>
<svg style="left:950.5px;top:113.600px" width="21" height="21" viewBox="0 0 21 21"><rect x="0.500" y="0.500" width="20" height="20" rx="0.5" fill="#d2d2d2" stroke="#dadada" stroke-width="1"/><path d="M4.700 4.300Q5.200 2.500 7 3.200L18.800 15.400L17.800 15.800Z" fill="#1e1e1e"/><path d="M6 4.300L7.500 5.600" stroke="#c8c8c8" stroke-width="0.700"/><path d="M5.600 4.300Q3 6.800 3.500 9.800T1.800 14" stroke="#f0a020" stroke-width="0.900" fill="none"/><path d="M1.00 16.60Q5.00 11.60 9.00 16.60Q5.00 21.60 1.00 16.60Z" fill="#f0f0f0" stroke="#0a0a0a" stroke-width="1.00"/><circle cx="5.00" cy="16.60" r="1.60" fill="#0a0a0a"/></svg>
<svg style="left:977.5px;top:113.600px" width="21" height="21" viewBox="0 0 21 21"><rect x="0.500" y="0.500" width="20" height="20" rx="0.5" fill="#d2d2d2" stroke="#d6d6d6" stroke-width="1"/><path d="M8.06 4.30Q11.40 9.89 14.74 4.30L16.13 5.23L19.00 9.22L16.74 11.75L14.90 10.02V17.60H7.90V10.02L6.06 11.75L3.80 9.22L6.67 5.23Z" fill="url(#gW2)" /><path d="M1.20 16.60Q5.00 12.00 8.80 16.60Q5.00 21.20 1.20 16.60Z" fill="#e2e2e2" stroke="#777" stroke-width="0.90"/><circle cx="5.00" cy="16.60" r="1.40" fill="#777"/></svg>
<svg style="left:1004.5px;top:113.600px" width="21" height="21" viewBox="0 0 21 21"><rect x="0.500" y="0.500" width="20" height="20" rx="0.5" fill="#d4d4d4" stroke="#d6d6d6" stroke-width="1"/><circle cx="11" cy="10.300" r="6.900" fill="#858585"/><path d="M11.200 9.200L10 14.300H12" stroke="#e6e6e6" stroke-width="1.700" fill="none"/><circle cx="11.800" cy="6.400" r="1.100" fill="#e6e6e6"/><path d="M1.20 16.60Q5.00 12.00 8.80 16.60Q5.00 21.20 1.20 16.60Z" fill="#e2e2e2" stroke="#777" stroke-width="0.90"/><circle cx="5.00" cy="16.60" r="1.40" fill="#777"/></svg>
<svg style="left:1031.5px;top:113.600px" width="21" height="21" viewBox="0 0 21 21"><rect x="0.500" y="0.500" width="20" height="20" rx="2" fill="#cecece" stroke="#7c7c7c" stroke-width="1"/><path d="M3.300 8L7.300 7.600L6.500 16Z" fill="#f6f6f6"/><path d="M7.800 4.500L15.800 3.300Q17.800 3.300 17.500 5.500L15.700 15.300Q15.400 17 13.800 17L6 16.400Q5 16.200 5.200 15Z" fill="url(#gC2)" stroke="#aeaeae" stroke-width="0.700"/><path d="M3.300 8L5.300 16.700L13.600 17.200Q9 16.300 6.500 16.100Z" fill="#f4f4f4"/></svg>
<svg style="left:1058.5px;top:113.600px" width="21" height="21" viewBox="0 0 21 21"><rect x="0.500" y="0.500" width="20" height="20" rx="0.5" fill="#d4d4d4" stroke="#d8d8d8" stroke-width="1"/><path d="M8.48 4.00Q12.00 9.59 15.52 4.00L16.98 4.93L20.00 8.92L17.62 11.45L15.68 9.72V17.30H8.32V9.72L6.38 11.45L4.00 8.92L7.02 4.93Z" fill="url(#gC3)" /><rect x="2.500" y="12.300" width="5.500" height="6" fill="#8a8a8a"/><path d="M3.600 12.300V10.800Q3.600 9.300 5.200 9.300T6.800 10.800V12.300" stroke="#e0e0e0" stroke-width="1.200" fill="none"/><rect x="4.600" y="14.500" width="1.300" height="1.800" fill="#e6e6e6"/></svg>
<svg style="left:1086px;top:114px" width="19" height="18" viewBox="0 0 19 18"><path d="M9.500 0L14.500 5.500H11.300V8.300H7.700V5.500H4.500Z" fill="#707070"/><path d="M0.500 9.500L3.200 10.800V12.500L5 14L6.800 12.500L8.600 14L10.400 12.500L12.200 14L14 12.500L15.800 14V10.800L18.500 9.500V16.800Q18.500 17.800 17.500 17.800H1.500Q0.500 17.800 0.500 16.800Z" fill="#7a7a7a"/></svg>
</div>
<div id="right">
<div class="abs panel" style="left:1566px;top:68px;width:348px;height:298px"></div>
<div class="docktitle" style="left:1566px;top:47px;width:320px">Fabric</div>
<svg style="left:1568px;top:50px" width="14" height="14" viewBox="0 0 14 14"><path d="M0.300 3.500H3.600V1.600L7.400 5.700L3.600 9.800V7.900H0.300Z" fill="#b0b0b0"/><rect x="11" y="0" width="1" height="13" fill="#0c0c0c"/></svg>
<div class="dd" style="left:1793px;top:50px"></div><svg style="left:1793px;top:50px" width="15" height="15" viewBox="0 0 15 15"><path d="M4.900 6H10.100L7.500 9.700Z" fill="#9c9c9c"/></svg>
<div class="tbtn" style="left:1884px;top:50px"></div><svg style="left:1884px;top:50px" width="13" height="13" viewBox="0 0 13 13"><path d="M6 5.500H3.400V9.600H8.400V7.500" stroke="#8e8e8e" stroke-width="1.100" fill="none"/><path d="M5.800 7.400L9.300 3.900" stroke="#8e8e8e" stroke-width="1.100"/><path d="M7.300 3H10.300V6Z" fill="#9a9a9a"/></svg>
<div class="tbtn" style="left:1899px;top:50px"></div><svg style="left:1899px;top:50px" width="13" height="13" viewBox="0 0 13 13"><path d="M3.400 3.700L9.400 9.700M9.400 3.700L3.400 9.700" stroke="#8c8c8c" stroke-width="1.150"/></svg>
<div class="fbtn" style="left:1576px;width:72px">增加</div>
<div class="fbtn dis" style="left:1658px;width:72px">复制</div>
<div class="fbtn dis" style="left:1740px;width:72px">应用</div>
<div class="fbtn" style="left:1822px;width:82px">删除未使用的</div>
<div class="abs dark" style="left:1576px;top:115px;width:328px;height:237px"></div>
<svg style="left:1600px;top:145px" width="16" height="14" viewBox="1600 145 16 14"><path d="M1603.900 151.300L1606.700 154.300L1612.100 148.400" fill="none" stroke="#f5b400" stroke-width="2.300"/></svg>
<div class="abs" style="left:1631px;top:134px;width:35px;height:35px;background:#fff"></div>
<div class="abs" style="left:1675px;top:146px;font-size:11px;line-height:14px;letter-spacing:-0.250px;color:#c8c8c8">FABRIC 1</div>
<div class="abs" style="left:1586px;top:179px;width:308px;height:1px;background:#3a3a3c"></div>
<div class="abs panel" style="left:1566px;top:388px;width:348px;height:612px"></div>
<div class="docktitle" style="left:1566px;top:367px;width:320px">Property Editor</div>
<svg style="left:1568px;top:370px" width="14" height="14" viewBox="0 0 14 14"><path d="M0.300 3.500H3.600V1.600L7.400 5.700L3.600 9.800V7.900H0.300Z" fill="#b0b0b0"/><rect x="11" y="0" width="1" height="13" fill="#0c0c0c"/></svg>
<div class="dd" style="left:1793px;top:370px"></div><svg style="left:1793px;top:370px" width="15" height="15" viewBox="0 0 15 15"><path d="M4.900 6H10.100L7.500 9.700Z" fill="#9c9c9c"/></svg>
<div class="tbtn" style="left:1884px;top:370px"></div><svg style="left:1884px;top:370px" width="13" height="13" viewBox="0 0 13 13"><path d="M6 5.500H3.400V9.600H8.400V7.500" stroke="#8e8e8e" stroke-width="1.100" fill="none"/><path d="M5.800 7.400L9.300 3.900" stroke="#8e8e8e" stroke-width="1.100"/><path d="M7.300 3H10.300V6Z" fill="#9a9a9a"/></svg>
<div class="tbtn" style="left:1899px;top:370px"></div><svg style="left:1899px;top:370px" width="13" height="13" viewBox="0 0 13 13"><path d="M3.400 3.700L9.400 9.700M9.400 3.700L3.400 9.700" stroke="#8c8c8c" stroke-width="1.150"/></svg>
</div>
<div id="status">
<div class="abs" style="left:36px;top:998px;width:1878px;height:2px;background:#3c3c3e"></div>
<div class="abs panel" style="left:36px;top:1000px;width:1878px;height:33px;border-top:1px solid #68686a"></div>
<div class="st" style="left:48px">Version:</div><div class="st" style="left:100px;letter-spacing:0.080px">7.1.143 (r41692)</div><div class="st" style="left:192px;letter-spacing:0">Untitled</div>
<svg style="left:992px;top:1009px" width="16" height="15" viewBox="992 1009 16 15"><path d="M999.500 1011L1005.300 1019.900H993.700Z" fill="#8c8c8c" stroke="#a6a6a6" stroke-width="0.800"/><path d="M994 1021.600H1005" stroke="#242426" stroke-width="1.400"/></svg>
<svg style="left:1768px;top:1005px" width="140" height="22" viewBox="1768 1005 140 22" fill="none" stroke="#707072" stroke-width="1">
<rect x="1770.500" y="1007.500" width="17" height="17" rx="1.500"/><path d="M1771 1008.500H1787" stroke-width="2"/>
<rect x="1799.500" y="1007.500" width="7" height="17" rx="1.500"/><rect x="1809.500" y="1007.500" width="7" height="17" rx="1.500"/>
<rect x="1828.500" y="1007.500" width="7" height="17" rx="1.500"/><rect x="1838.500" y="1007.500" width="7" height="7" rx="1.500"/><rect x="1838.500" y="1017.500" width="7" height="7" rx="1.500"/>
<rect x="1857.500" y="1007.500" width="7" height="7" rx="1.500"/><rect x="1867.500" y="1007.500" width="7" height="7" rx="1.500"/><rect x="1857.500" y="1017.500" width="7" height="7" rx="1.500"/><rect x="1867.500" y="1017.500" width="7" height="7" rx="1.500"/>
<rect x="1886.500" y="1007.500" width="17" height="17" rx="1.500"/><path d="M1887 1008.500H1903" stroke-width="2"/>
<path d="M1898 1014.700A3.300 3.300 0 1 0 1898.400 1017.800" stroke-width="1.100"/><path d="M1899.300 1012.500V1016H1895.800Z" fill="#707072" stroke="none"/>
</svg>
</div>
</body>
</html>
